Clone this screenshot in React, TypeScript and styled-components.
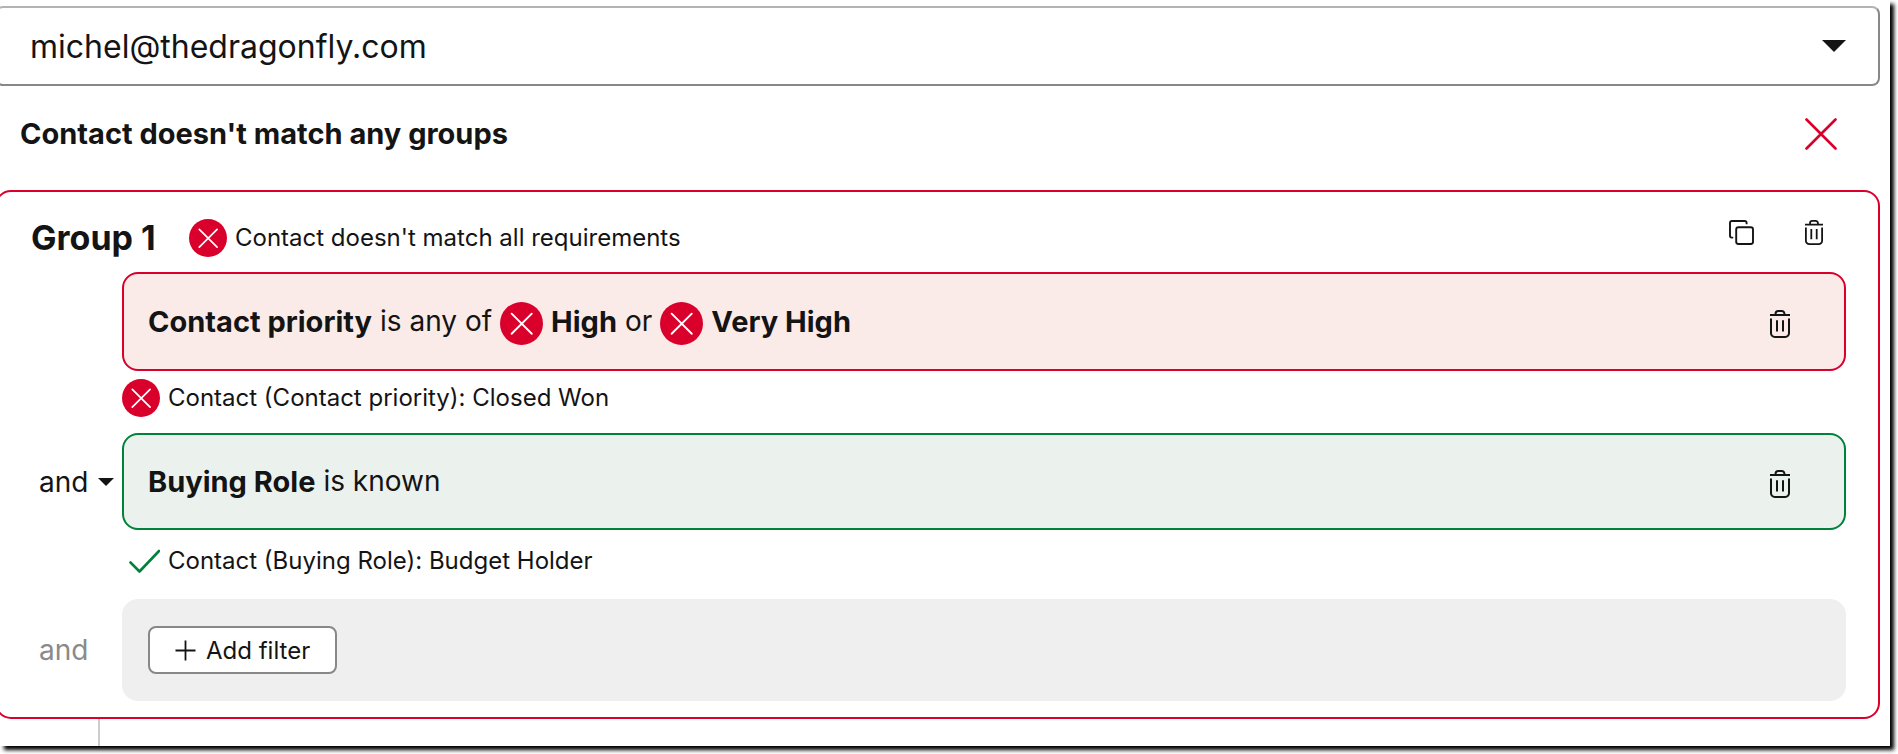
import React from "react";
import styled, { createGlobalStyle } from "styled-components";

const red = "#d9002b";
const green = "#00823a";
const ink = "#141414";

const GlobalStyle = createGlobalStyle`
  *, *::before, *::after { box-sizing: border-box; }
  body {
    margin: 0;
    background: #fff;
    color: ${ink};
    font-family: Inter, "Liberation Sans", sans-serif;
    font-weight: 400;
    overflow-x: hidden;
  }
  button, select { font: inherit; color: inherit; }
`;

const Sheet = styled.main`
  margin: 0 8px 8px 0;
  padding: 6px 10px 0 0;
  background: #fff;
  box-shadow: 4px 4px 4px #000;
`;

const SelectWrap = styled.div`
  display: grid;
  align-items: center;
  margin-left: -5px;

  & > * { grid-area: 1 / 1; }
  & > svg { justify-self: end; margin-right: 34px; pointer-events: none; }
`;

const ContactSelect = styled.select`
  appearance: none;
  width: 100%;
  height: 80px;
  padding: 0 80px 0 33px;
  border: 2px solid #888;
  border-top-color: #b3b3b3;
  border-radius: 8px;
  background: #fff;
  font-size: 32px;
`;

const StatusBar = styled.section`
  display: flex;
  align-items: center;
  justify-content: space-between;
  height: 96px;
  margin-bottom: 8px;
  padding: 0 43px 0 20px;
`;

const StatusTitle = styled.h1`
  margin: 0;
  font-size: 29px;
  line-height: 36px;
  font-weight: 700;
`;

const GroupCard = styled.section`
  margin-left: -5px;
  padding: 26px 32px 16px 34px;
  border: 2px solid ${red};
  border-radius: 16px;
`;

const GroupHeader = styled.header`
  display: flex;
  align-items: center;
  height: 40px;
  margin-bottom: 14px;
  padding-right: 23px;
`;

const GroupTitle = styled.h2`
  width: 158px;
  margin: 0;
  font-size: 34px;
  line-height: 40px;
  font-weight: 700;
`;

const Note = styled.p`
  display: flex;
  align-items: center;
  gap: 8px;
  margin: 0;
  font-size: 24px;
  line-height: 38px;
`;

const HeaderActions = styled.div`
  display: flex;
  gap: 51px;
  margin: 0 0 12px auto;
`;

const IconButton = styled.button`
  display: flex;
  padding: 0;
  border: 0;
  background: none;
  cursor: pointer;
`;

const FilterRow = styled.div`
  display: grid;
  grid-template-columns: 91px 1fr;
  align-items: center;
`;

const RowNote = styled(Note)<{ $tall?: boolean }>`
  margin-left: 91px;
  padding: ${(p) => (p.$tall ? "12px 0 19px" : "8px 0 16px")};
`;

const Combinator = styled.label`
  display: flex;
  align-items: center;
  gap: 7px;
  padding-left: 8px;
  font-size: 28px;
  line-height: 36px;
`;

const CombinatorSelect = styled.select`
  appearance: none;
  width: 52px;
  padding: 0;
  border: 0;
  background: none;
`;

const NextCombinator = styled.span`
  padding-left: 8px;
  font-size: 28px;
  line-height: 36px;
  color: #8a8a8a;
`;

const tones = {
  fail: { border: red, fill: "#fbebe8", height: 99 },
  pass: { border: green, fill: "#ebf2ee", height: 97 },
};

const FilterBox = styled.div<{ $tone: keyof typeof tones }>`
  display: flex;
  align-items: center;
  justify-content: space-between;
  height: ${(p) => tones[p.$tone].height}px;
  padding: 0 54px 0 24px;
  border: 2px solid ${(p) => tones[p.$tone].border};
  border-radius: 16px;
  background: ${(p) => tones[p.$tone].fill};

  svg { margin-top: 4px; }
`;

const Rule = styled.p`
  display: flex;
  align-items: center;
  gap: 8px;
  margin: 0;
  font-size: 28px;
  line-height: 43px;
  white-space: nowrap;

  strong { font-size: 29px; font-weight: 700; }
`;

const AddBox = styled.div`
  display: flex;
  align-items: center;
  height: 102px;
  padding: 0 26px;
  border-radius: 16px;
  background: #efefef;
`;

const AddButton = styled.button`
  display: flex;
  align-items: center;
  justify-content: center;
  gap: 10px;
  height: 48px;
  padding: 0 25px;
  border: 2px solid #888;
  border-radius: 8px;
  background: #fff;
  font-size: 24px;
  cursor: pointer;
`;

const Connector = styled.div`
  width: 2px;
  height: 27px;
  margin-left: 98px;
  background: #ccc;
`;

const Caret = ({ width }: { width: number }) => (
  <svg width={width} height={width / 2} viewBox="0 0 24 12" aria-hidden="true">
    <path d="M0 0h24L12 12z" fill={ink} />
  </svg>
);

const FailBadge = ({ size = 38 }: { size?: number }) => (
  <svg width={size} height={size} viewBox="0 0 38 38" aria-hidden="true">
    <circle cx="19" cy="19" r="19" fill={red} />
    <path d="M10.3 10.3l17.8 17.8M28.1 10.3L10.3 28.1" stroke="#fff" strokeWidth="1.7" strokeLinecap="round" />
  </svg>
);

const Cross = () => (
  <svg width="32" height="32" viewBox="0 0 32 32" aria-hidden="true">
    <path d="M1.5 1.5l29 29M30.5 1.5l-29 29" stroke={red} strokeWidth="2.6" strokeLinecap="round" />
  </svg>
);

const Check = () => (
  <svg width="38" height="26" viewBox="0 0 38 26" fill="none" aria-hidden="true">
    <path d="M8.5 14.5l9 9L37 3" stroke={green} strokeWidth="2.6" strokeLinecap="round" strokeLinejoin="round" />
  </svg>
);

const Plus = () => (
  <svg width="21" height="21" viewBox="0 0 21 21" aria-hidden="true">
    <path d="M10.5 .5v20M.5 10.5h20" stroke={ink} strokeWidth="1.8" />
  </svg>
);

const Copy = () => (
  <svg width="25" height="25" viewBox="0 0 25 25" fill="none" stroke={ink} strokeWidth="1.9" strokeLinecap="round" aria-hidden="true">
    <rect x="7.2" y="7.2" width="16.8" height="16.8" rx="2.2" />
    <path d="M17.6 3.4V2.8A1.8 1.8 0 0 0 15.8 1H2.8A1.8 1.8 0 0 0 1 2.8v13a1.8 1.8 0 0 0 1.8 1.8h.6" />
  </svg>
);

const Trash = ({ width = 20, height = 28 }: { width?: number; height?: number }) => (
  <svg width={width} height={height} viewBox="0 0 20 28" preserveAspectRatio="none" fill="none" stroke={ink} strokeWidth="2" aria-hidden="true">
    <path d="M0 5.1h20M5.6 5V3.6A2.6 2.6 0 0 1 8.2 1h3.6a2.6 2.6 0 0 1 2.6 2.6V5" />
    <path d="M1 8.4v14.8A3.8 3.8 0 0 0 4.8 27h10.4a3.8 3.8 0 0 0 3.8-3.8V8.4M7 10.2v11.4M13 10.2v11.4" />
  </svg>
);

export default function App() {
  return (
    <>
      <GlobalStyle />
      <Sheet>
        <SelectWrap>
          <ContactSelect aria-label="Contact" defaultValue="michel">
            <option value="michel">michel@thedragonfly.com</option>
          </ContactSelect>
          <Caret width={24} />
        </SelectWrap>

        <StatusBar>
          <StatusTitle>Contact doesn't match any groups</StatusTitle>
          <Cross />
        </StatusBar>

        <GroupCard>
          <GroupHeader>
            <GroupTitle>Group 1</GroupTitle>
            <Note>
              <FailBadge />
              Contact doesn't match all requirements
            </Note>
            <HeaderActions>
              <IconButton type="button" aria-label="Clone group">
                <Copy />
              </IconButton>
              <IconButton type="button" aria-label="Delete group">
                <Trash width={18} height={25} />
              </IconButton>
            </HeaderActions>
          </GroupHeader>

          <FilterRow>
            <span />
            <FilterBox $tone="fail">
              <Rule>
                <strong>Contact priority</strong> is any of <FailBadge size={43} />
                <strong>High</strong> or <FailBadge size={43} />
                <strong>Very High</strong>
              </Rule>
              <IconButton type="button" aria-label="Delete Contact priority filter">
                <Trash />
              </IconButton>
            </FilterBox>
          </FilterRow>
          <RowNote>
            <FailBadge />
            Contact (Contact priority): Closed Won
          </RowNote>

          <FilterRow>
            <Combinator>
              <CombinatorSelect aria-label="Combine filters with" defaultValue="and">
                <option value="and">and</option>
                <option value="or">or</option>
              </CombinatorSelect>
              <Caret width={16} />
            </Combinator>
            <FilterBox $tone="pass">
              <Rule>
                <strong>Buying Role</strong> is known
              </Rule>
              <IconButton type="button" aria-label="Delete Buying Role filter">
                <Trash />
              </IconButton>
            </FilterBox>
          </FilterRow>
          <RowNote $tall>
            <Check />
            Contact (Buying Role): Budget Holder
          </RowNote>

          <FilterRow>
            <NextCombinator>and</NextCombinator>
            <AddBox>
              <AddButton type="button">
                <Plus />
                Add filter
              </AddButton>
            </AddBox>
          </FilterRow>
        </GroupCard>
        <Connector />
      </Sheet>
    </>
  );
}
